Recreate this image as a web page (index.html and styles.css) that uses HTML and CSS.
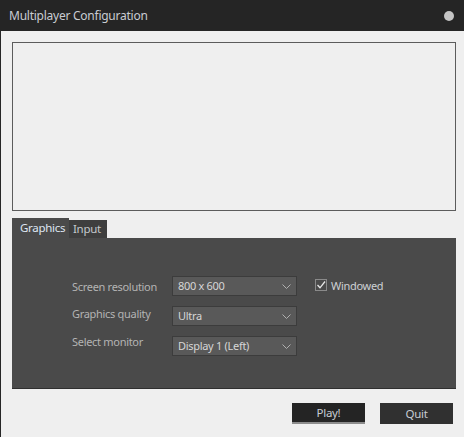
FILE: index.html
```
<!DOCTYPE html>
<html>
<head>
<meta charset="utf-8">
<link rel="stylesheet" href="styles.css">
</head>
<body>
<div class="window">
  <div class="titlebar">
    <span class="title">Multiplayer Configuration</span>
    <span class="dot"></span>
  </div>
  <div class="content">
    <div class="preview"></div>
    <div class="tabs">
      <div class="tab active">Graphics</div>
      <div class="tab">Input</div>
    </div>
    <div class="panel">
      <div class="form">
        <div class="label l1">Screen resolution</div>
        <div class="select">800 x 600<svg class="chev" width="9" height="5" viewBox="0 0 9 5"><path d="M0.5 0.5 L4.5 4.5 L8.5 0.5" fill="none" stroke="#b0b0b0" stroke-width="1"/></svg></div>
        <label class="check"><span class="box"><svg width="10" height="10" viewBox="0 0 10 10"><path d="M1.5 5 L4 7.8 L9 1.5" fill="none" stroke="#e8e8e8" stroke-width="1.3"/></svg></span>Windowed</label>
        <div class="label l2">Graphics quality</div>
        <div class="select">Ultra<svg class="chev" width="9" height="5" viewBox="0 0 9 5"><path d="M0.5 0.5 L4.5 4.5 L8.5 0.5" fill="none" stroke="#b0b0b0" stroke-width="1"/></svg></div>
        <div></div>
        <div class="label l3">Select monitor</div>
        <div class="select">Display 1 (Left)<svg class="chev" width="9" height="5" viewBox="0 0 9 5"><path d="M0.5 0.5 L4.5 4.5 L8.5 0.5" fill="none" stroke="#b0b0b0" stroke-width="1"/></svg></div>
        <div></div>
      </div>
    </div>
    <div class="buttons">
      <button class="btn play">Play!</button>
      <button class="btn quit">Quit</button>
    </div>
  </div>
</div>
</body>
</html>
```
FILE: styles.css
```
* { box-sizing: border-box; }
html, body { margin: 0; padding: 0; }
body {
  width: 464px;
  height: 437px;
  overflow: hidden;
  background: #efefef;
  font-family: "Noto Sans", "Open Sans", sans-serif;
  font-size: 11px;
  letter-spacing: -0.3px;
}
.window {
  height: 437px;
  border-left: 1px solid #262626;
  background: #efefef;
}
.titlebar {
  height: 31px;
  background: #252525;
  display: flex;
  align-items: center;
  justify-content: space-between;
  padding: 0 10px 0 8px;
  margin-left: -1px;
}
.title {
  color: #c9ccd2;
  font-size: 12px;
  letter-spacing: -0.25px;
  padding-left: 1px;
}
.dot {
  width: 10px;
  height: 10px;
  border-radius: 50%;
  background: #c4c4c4;
}
.content {
  padding: 11px 8px 0 11px;
}
.preview {
  height: 169px;
  border: 1px solid #5c5c5c;
  background: #efefef;
}
.tabs {
  margin-top: 7px;
  display: flex;
  align-items: flex-end;
  height: 20px;
}
.tab {
  height: 18px;
  padding: 0 6px 0 4px;
  background: #3e3e3e;
  color: #c4c8cc;
  line-height: 18px;
  font-size: 11.5px;
}
.tab.active {
  height: 20px;
  width: 57px;
  padding-left: 8px;
  background: #4a4a4a;
  color: #dfe6f2;
  line-height: 20px;
}
.panel {
  height: 151px;
  background: #4a4a4a;
  border-bottom: 1px solid #2f2f2f;
  padding: 38px 0 0 60px;
}
.form {
  display: grid;
  grid-template-columns: 100px 125px auto;
  grid-template-rows: 20px 20px 20px;
  row-gap: 10px;
  column-gap: 0;
}
.label {
  color: #b4b4b4;
  line-height: 14px;
  align-self: start;
}
.l1 { margin-top: 4px; }
.l2 { margin-top: 1px; }
.l3 { margin-top: -1px; }
.select {
  position: relative;
  height: 20px;
  background: #595959;
  border: 1px solid #3c3c3c;
  color: #d6d6d6;
  line-height: 18px;
  padding-left: 5px;
}
.form .select:nth-of-type(3) { margin-top: -1px; }
.chev {
  position: absolute;
  right: 5px;
  top: 7px;
}
.check {
  display: flex;
  align-items: center;
  margin-left: 18px;
  color: #cdd0d4;
  height: 14px;
  margin-top: 2px;
}
.box {
  width: 12px;
  height: 12px;
  border: 1px solid #8a8a8a;
  background: #4a4a4a;
  margin-right: 4px;
  display: flex;
  align-items: center;
  justify-content: center;
}
.buttons {
  display: flex;
  justify-content: flex-end;
  gap: 15px;
  margin-top: 14px;
  padding-right: 3px;
}
.btn {
  width: 73px;
  height: 21px;
  border: none;
  font-family: "Noto Sans", "Open Sans", sans-serif;
  font-size: 11.5px;
  letter-spacing: -0.3px;
  color: #c8ccd4;
  padding: 0;
  line-height: 19px;
}
.play {
  background: #242424;
  border-bottom: 2px solid #8c8c8c;
}
.quit {
  background: #303030;
  line-height: 21px;
}
```
